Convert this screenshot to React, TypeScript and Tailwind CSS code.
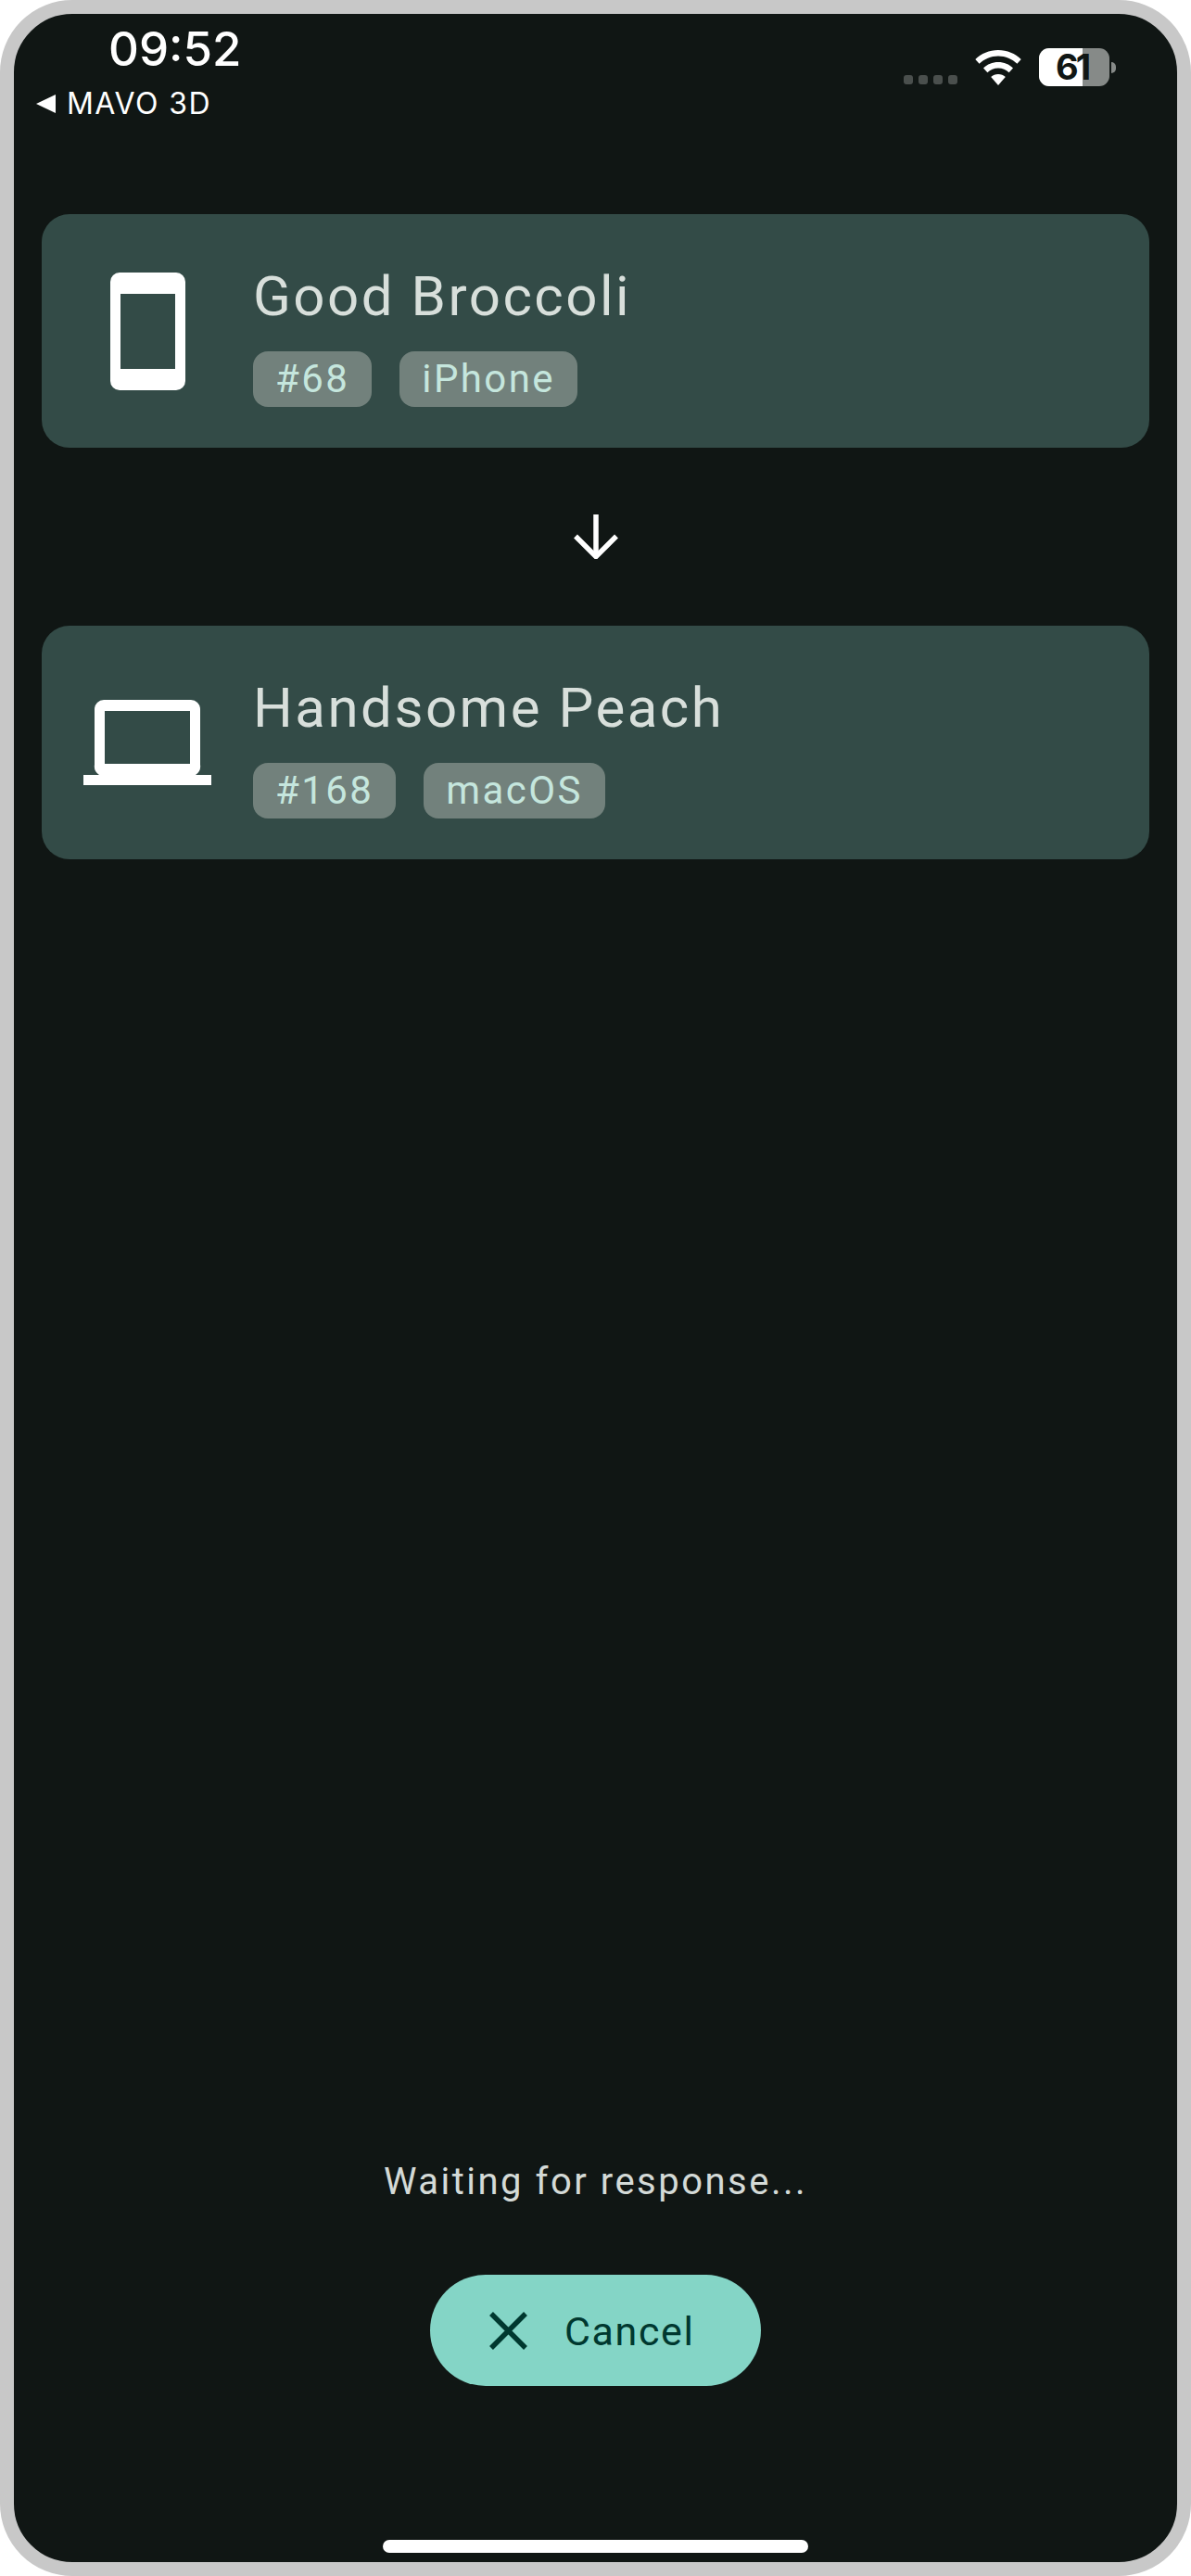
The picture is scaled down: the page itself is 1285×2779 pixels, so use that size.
import React from 'react';

function PhoneIcon() {
  return (
    <svg width="81" height="127" viewBox="0 0 81 127">
      <path
        fillRule="evenodd"
        fill="#fff"
        d="M10 0h61a10 10 0 0 1 10 10v107a10 10 0 0 1-10 10H10a10 10 0 0 1-10-10V10A10 10 0 0 1 10 0zM11 23v81h59V23z"
      />
    </svg>
  );
}

function LaptopIcon() {
  return (
    <svg width="138" height="92" viewBox="0 0 138 92">
      <path
        fillRule="evenodd"
        fill="#fff"
        d="M22 0h94a10 10 0 0 1 10 10v60a11 11 0 0 1-5 11h17v11H0V81h17a11 11 0 0 1-5-11V10A10 10 0 0 1 22 0zM23 12v57h92V12z"
      />
    </svg>
  );
}

function ArrowIcon() {
  return (
    <svg width="48" height="48" viewBox="0 0 48 48" fill="none" stroke="#fff" strokeWidth="5.500">
      <path d="M24 0v45" />
      <path d="M2 23.500l22 22 22-22" />
    </svg>
  );
}

function CloseIcon() {
  return (
    <svg width="41" height="41" viewBox="0 0 41 41" fill="none" stroke="#00382f" strokeWidth="5.500">
      <path d="M2 2l37 37M39 2L2 39" />
    </svg>
  );
}

function WifiIcon() {
  return (
    <svg width="50" height="38" viewBox="0 0 50 38" fill="#fff">
      <path d="M25 0c9.600 0 18.300 3.800 24.700 10l-4.300 4.800C40 9.700 32.900 6.500 25 6.500S10 9.700 4.600 14.800L.3 10C6.700 3.800 15.400 0 25 0z" />
      <path d="M25 13c6.200 0 11.800 2.400 16 6.400l-4.400 4.800c-3-2.900-7.100-4.700-11.600-4.700s-8.600 1.800-11.600 4.700L9 19.400c4.200-4 9.800-6.400 16-6.400z" />
      <path d="M25 26c3 0 5.800 1.200 7.800 3.100L25 38l-7.800-8.900c2-1.900 4.800-3.100 7.800-3.100z" />
    </svg>
  );
}

function StatusBar() {
  return (
    <div className="flex h-[216px] justify-between font-['Inter',sans-serif] text-white">
      <div className="flex flex-col">
        <div className="mt-[8px] ml-[102px] text-[51px] leading-[60px] font-medium">09:52</div>
        <div className="mt-[11px] ml-[24px] flex items-center gap-[12px]">
          <div className="h-0 w-0 border-y-[10px] border-r-[21px] border-y-transparent border-r-white" />
          <span className="text-[32px] leading-[36px] font-normal tracking-[1.4px]">MAVO 3D</span>
        </div>
      </div>
      <div className="mt-[37px] mr-[66px] flex h-[41px] items-start">
        <div className="mt-[29px] mr-[19px] flex gap-[6px]">
          <div className="h-[10px] w-[10px] rounded-[3px] bg-[#4a4f4d]" />
          <div className="h-[10px] w-[10px] rounded-[3px] bg-[#4a4f4d]" />
          <div className="h-[10px] w-[10px] rounded-[3px] bg-[#4a4f4d]" />
          <div className="h-[10px] w-[10px] rounded-[3px] bg-[#4a4f4d]" />
        </div>
        <div className="mt-[2px] mr-[19px]">
          <WifiIcon />
        </div>
        <div className="flex items-center">
          <div className="relative flex h-[41px] w-[76px] items-center justify-center rounded-[11px] bg-[#868a88] pr-[5px]">
            <div className="absolute inset-y-0 left-0 w-[47px] rounded-l-[11px] bg-white" />
            <span className="relative text-[38px] leading-[41px] font-bold tracking-[-3px] text-[#101614]">61</span>
          </div>
          <div className="ml-[2px] h-[12px] w-[5px] rounded-r-full bg-[#868a88]" />
        </div>
      </div>
    </div>
  );
}

function Chip({ label }: { label: string }) {
  return (
    <div className="flex h-[60px] items-center rounded-[16px] bg-[#72817c] px-[24px] text-[42px] leading-none font-normal tracking-[2.400px] text-[#c5e6dd]">
      {label}
    </div>
  );
}

function DeviceCard({ name, chips, icon }: { name: string; chips: string[]; icon: React.ReactNode }) {
  return (
    <div className="flex h-[252px] items-center rounded-[30px] bg-[#334b47]">
      <div className="flex w-[228px] justify-center">{icon}</div>
      <div className="flex flex-col pt-[10px]">
        <div className="text-[60px] leading-[68px] font-normal tracking-[2.500px] text-[#d8dfdb]">{name}</div>
        <div className="mt-[25px] flex gap-[30px]">
          {chips.map((c) => (
            <Chip key={c} label={c} />
          ))}
        </div>
      </div>
    </div>
  );
}

export default function App() {
  return (
    <div className="h-[2779px] w-[1285px] bg-white font-['Roboto',sans-serif]">
      <div className="flex h-full flex-col overflow-hidden rounded-[78px] border-[15px] border-[#c8c8c8] bg-[#101614]">
        <StatusBar />
        <div className="px-[30px]">
          <DeviceCard name="Good Broccoli" chips={['#68', 'iPhone']} icon={<PhoneIcon />} />
          <div className="flex h-[192px] items-center justify-center">
            <ArrowIcon />
          </div>
          <DeviceCard name="Handsome Peach" chips={['#168', 'macOS']} icon={<LaptopIcon />} />
        </div>

        <div className="flex-1" />

        <div className="flex flex-col items-center">
          <div className="text-[40px] leading-[48px] font-normal tracking-[2.500px] text-[#d4dad7]">Waiting for response...</div>
          <button className="mt-[76px] flex h-[120px] w-[357px] items-center rounded-full bg-[#84d5c6] pl-[64px]">
            <CloseIcon />
            <span className="mt-[2px] ml-[40px] text-[43px] leading-none font-normal tracking-[1.600px] text-[#00382f]">Cancel</span>
          </button>
          <div className="mt-[166px] mb-[10px] h-[14px] w-[459px] rounded-full bg-white" />
        </div>
      </div>
    </div>
  );
}
